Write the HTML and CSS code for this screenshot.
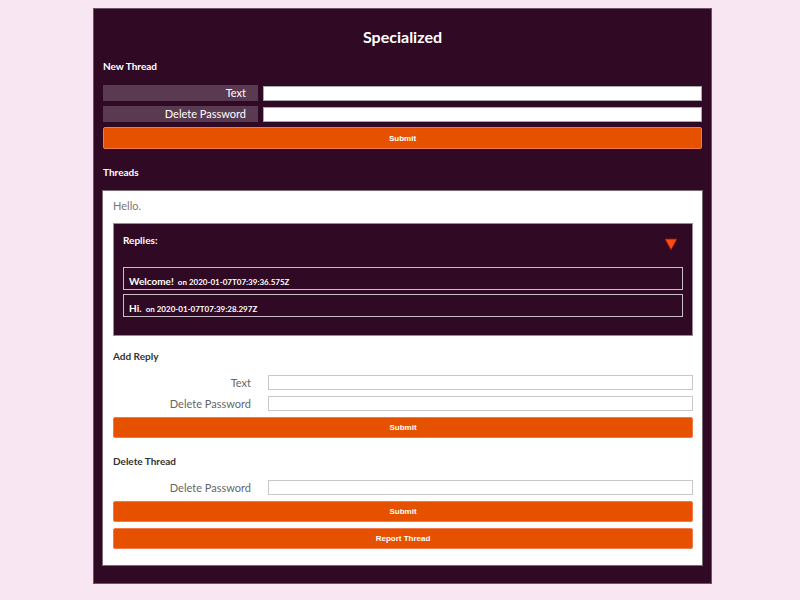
FILE: index.html
```html
<!DOCTYPE html>
<html>
<head>
<meta charset="utf-8">
<link rel="stylesheet" href="styles.css">
</head>
<body>
<div class="panel">
  <h1 class="title">Specialized</h1>
  <h2 class="section">New Thread</h2>
  <form class="form dark">
    <div class="row"><label class="lbl">Text</label><input class="inp" type="text"></div>
    <div class="row"><label class="lbl">Delete Password</label><input class="inp" type="text"></div>
    <button class="btn" type="button">Submit</button>
  </form>
  <h2 class="section threads">Threads</h2>
  <div class="card">
    <p class="body">Hello.</p>
    <div class="replies">
      <div class="replies-head">
        <span class="replies-title">Replies:</span>
        <svg class="tri" width="14" height="13" viewBox="0 0 14 13"><polygon points="1,1 13,1 7,12" fill="#ff4a14" stroke="#8a1a0a" stroke-width="0.8"/></svg>
      </div>
      <div class="reply"><span class="rtext">Welcome!</span> <span class="rdate">on 2020-01-07T07:39:36.575Z</span></div>
      <div class="reply"><span class="rtext">Hi.</span> <span class="rdate">on 2020-01-07T07:39:28.297Z</span></div>
    </div>
    <h3 class="sub">Add Reply</h3>
    <form class="form light">
      <div class="row"><label class="lbl">Text</label><input class="inp" type="text"></div>
      <div class="row"><label class="lbl">Delete Password</label><input class="inp" type="text"></div>
      <button class="btn" type="button">Submit</button>
    </form>
    <h3 class="sub del">Delete Thread</h3>
    <form class="form light">
      <div class="row"><label class="lbl">Delete Password</label><input class="inp" type="text"></div>
      <button class="btn" type="button">Submit</button>
      <button class="btn" type="button">Report Thread</button>
    </form>
  </div>
</div>
</body>
</html>
```
FILE: styles.css
```css
html, body {
  margin: 0;
  padding: 0;
  background: #f9e6f3;
  font-family: "Lato", "Noto Sans", sans-serif;
}
.panel {
  box-sizing: border-box;
  width: 619px;
  margin: 8px 0 0 93px;
  height: 576px;
  background: #300a24;
  border: 1px solid #6b5563;
  padding: 18px 9px 0 9px;
  color: #fff;
}
.title {
  margin: 0;
  text-align: center;
  font-size: 16px;
  line-height: 20px;
  font-weight: 700;
}
.section {
  margin: 12px 0 0 0;
  font-size: 10px;
  line-height: 14px;
  font-weight: 700;
}
.threads { margin-top: 16px; }
.form {
  display: flex;
  flex-direction: column;
}
.form.dark { margin-top: 12px; gap: 5px; }
.row {
  display: flex;
  align-items: center;
  gap: 5px;
}
.dark .lbl {
  box-sizing: border-box;
  width: 155px;
  height: 16px;
  background: #5a3a50;
  text-align: right;
  padding-right: 12px;
  font-size: 11px;
  line-height: 16px;
  color: #fff;
}
.inp {
  box-sizing: border-box;
  flex: 1;
  height: 15px;
  margin: 0;
  border: 1px solid #a9a9a9;
  background: #fff;
  padding: 0 2px;
}
.btn {
  box-sizing: border-box;
  width: 100%;
  height: 22px;
  margin: 0;
  background: #e65100;
  border: 1px solid #f07a4a;
  border-radius: 2px;
  color: #fff;
  font-family: "Liberation Sans", Arial, sans-serif;
  font-weight: 700;
  font-size: 8px;
  padding: 0;
}
.card {
  box-sizing: border-box;
  margin: 11px 0 0 -1px;
  width: 601px;
  height: 376px;
  background: #fff;
  border: 1px solid #7a6a74;
  padding: 8px 9px 0 10px;
  color: #333;
}
.body {
  margin: 0;
  font-size: 11px;
  line-height: 14px;
  color: #777;
}
.replies {
  box-sizing: border-box;
  margin-top: 10px;
  height: 113px;
  background: #300a24;
  border: 1px solid #9a8c95;
  padding: 9px 9px 0 9px;
  color: #fff;
}
.replies-head {
  display: flex;
  justify-content: space-between;
  align-items: flex-start;
  height: 34px;
}
.replies-title {
  font-size: 10px;
  font-weight: 700;
  line-height: 14px;
}
.tri { margin: 5px 5px 0 0; }
.reply {
  box-sizing: border-box;
  height: 23px;
  border: 1px solid #c8c0c5;
  padding: 0 5px;
  margin-bottom: 4px;
  line-height: 21px;
  white-space: nowrap;
}
.rtext { font-size: 10px; font-weight: 700; }
.rdate { font-size: 8px; font-weight: 700; }
.sub {
  margin: 13px 0 0 0;
  font-size: 10px;
  line-height: 14px;
  font-weight: 700;
  color: #333;
}
.sub.del { margin-top: 16px; }
.form.light { margin-top: 12px; gap: 6px; }
.light .lbl {
  box-sizing: border-box;
  width: 150px;
  text-align: right;
  padding-right: 12px;
  font-size: 11px;
  line-height: 15px;
  color: #666;
}
.light .inp { border-color: #c8c8c8; }
.light .btn { height: 21px; }
```
